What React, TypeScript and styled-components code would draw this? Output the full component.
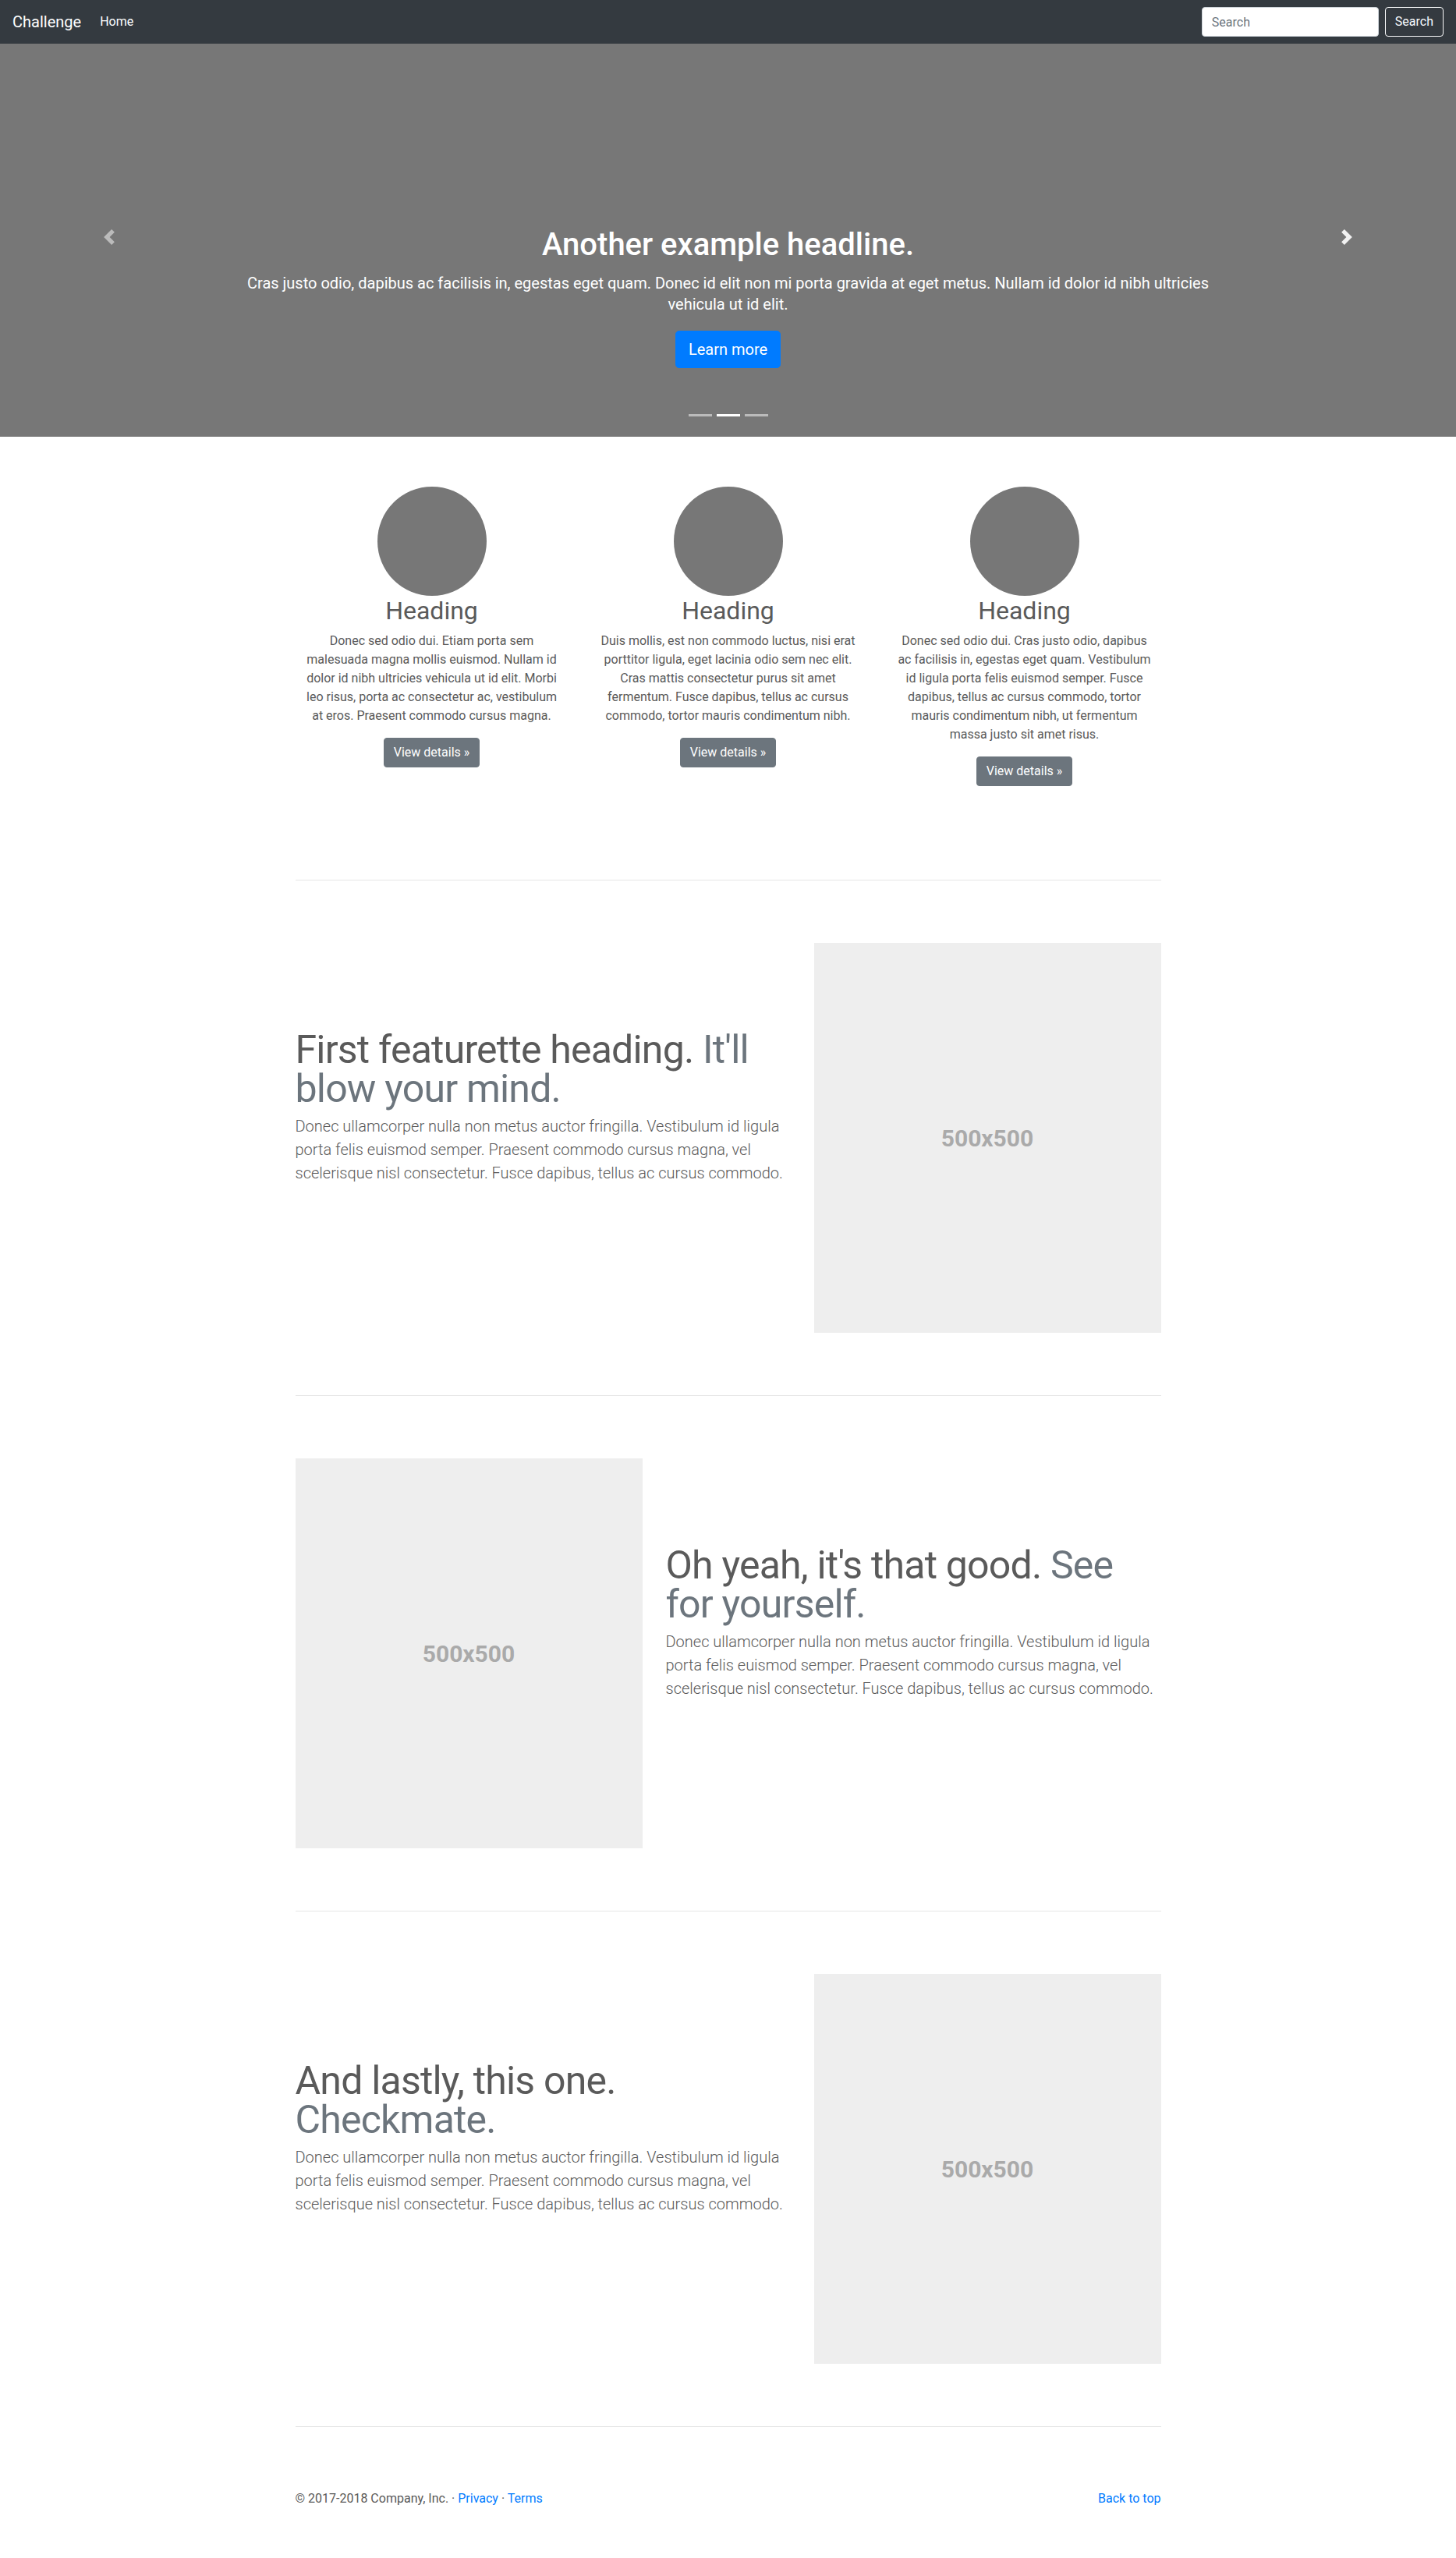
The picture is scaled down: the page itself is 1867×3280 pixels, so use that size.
import React from "react";
import styled, { createGlobalStyle } from "styled-components";

const GlobalStyle = createGlobalStyle`
  *, *::before, *::after { box-sizing: border-box; }
  html, body { margin: 0; padding: 0; }
  body {
    font-family: Roboto, "Liberation Sans", Arial, sans-serif;
    font-size: 16px;
    line-height: 1.5;
    color: #5a5a5a;
    background: #fff;
  }
  a { color: #007bff; text-decoration: none; }
`;

const Page = styled.div`
  padding-bottom: 48px;
`;

/* ---------- Navbar ---------- */
const Navbar = styled.nav`
  display: flex;
  align-items: center;
  justify-content: space-between;
  height: 56px;
  padding: 8px 16px;
  background: #343a40;
`;

const NavLeft = styled.div`
  display: flex;
  align-items: center;
`;

const Brand = styled.a`
  font-size: 20px;
  line-height: 30px;
  padding: 5px 0;
  margin-right: 16px;
  color: #fff;
`;

const NavItem = styled.a`
  font-size: 16px;
  line-height: 24px;
  padding: 8px;
  color: #fff;
`;

const SearchForm = styled.form`
  display: flex;
  align-items: center;
  margin: 0;
`;

const SearchInput = styled.input`
  width: 227px;
  height: 38px;
  margin-right: 8px;
  padding: 6px 12px;
  font-family: inherit;
  font-size: 16px;
  line-height: 24px;
  color: #495057;
  background: #fff;
  border: 1px solid #ced4da;
  border-radius: 4px;
  outline: none;
  &::placeholder { color: #6c757d; }
`;

const OutlineButton = styled.button`
  height: 38px;
  padding: 6px 12px;
  font-family: inherit;
  font-size: 16px;
  line-height: 24px;
  color: #f8f9fa;
  background: transparent;
  border: 1px solid #f8f9fa;
  border-radius: 4px;
`;

/* ---------- Carousel ---------- */
const Carousel = styled.section`
  position: relative;
  height: 504px;
  margin-bottom: 64px;
  background: #777;
  display: flex;
  justify-content: center;
  align-items: flex-end;
  overflow: hidden;
`;

const Caption = styled.div`
  position: relative;
  z-index: 2;
  width: 70%;
  padding-bottom: 88px;
  text-align: center;
  color: #fff;
`;

const CaptionTitle = styled.h1`
  margin: 0 0 12px;
  font-size: 40px;
  font-weight: 500;
  line-height: 48px;
`;

const CaptionText = styled.p`
  margin: 0 0 20px;
  font-size: 20px;
  line-height: 27px;
`;

const PrimaryButton = styled.a`
  display: inline-block;
  padding: 8px 16px;
  font-size: 20px;
  line-height: 30px;
  color: #fff;
  background: #007bff;
  border: 1px solid #007bff;
  border-radius: 4.8px;
`;

const Control = styled.a<{ $side: "left" | "right"; $opacity: number }>`
  position: absolute;
  top: 0;
  bottom: 0;
  ${(p) => (p.$side === "left" ? "left: 0;" : "right: 0;")}
  width: 15%;
  z-index: 1;
  display: flex;
  align-items: center;
  justify-content: center;
  padding-bottom: 8px;
  opacity: ${(p) => p.$opacity};
`;

const Indicators = styled.ol`
  position: absolute;
  left: 0;
  right: 0;
  bottom: 26px;
  z-index: 3;
  margin: 0;
  padding: 0;
  list-style: none;
  display: flex;
  justify-content: center;
  gap: 6px;
`;

const Indicator = styled.li<{ $active?: boolean }>`
  width: 30px;
  height: 3px;
  background: #fff;
  opacity: ${(p) => (p.$active ? 1 : 0.5)};
`;

/* ---------- Marketing ---------- */
const Container = styled.div`
  width: 1140px;
  margin: 0 auto;
  padding: 0 15px;
`;

const MarketingGrid = styled.div`
  display: grid;
  grid-template-columns: repeat(3, 350px);
  column-gap: 30px;
  align-items: start;
`;

const MarketingCol = styled.div`
  text-align: center;
  margin-bottom: 24px;
`;

const Circle = styled.div`
  width: 140px;
  height: 140px;
  margin: 0 auto;
  border-radius: 50%;
  background: #777;
`;

const ColHeading = styled.h2`
  margin: 0 0 8px;
  font-size: 32px;
  font-weight: 400;
  line-height: 1.2;
`;

const ColText = styled.p`
  margin: 0 10px 16px;
`;

const ButtonRow = styled.div`
  display: flex;
  justify-content: center;
  margin-bottom: 16px;
`;

const SecondaryButton = styled.a`
  display: inline-block;
  padding: 6px 12px;
  font-size: 16px;
  line-height: 24px;
  color: #fff;
  background: #6c757d;
  border: 1px solid #6c757d;
  border-radius: 4px;
`;

/* ---------- Featurettes ---------- */
const Divider = styled.hr`
  margin: 80px 0;
  height: 0;
  border: 0;
  border-top: 1px solid rgba(0, 0, 0, 0.1);
`;

const FeatureRow = styled.div<{ $reverse?: boolean }>`
  display: grid;
  grid-template-columns: ${(p) => (p.$reverse ? "445px 635px" : "635px 445px")};
  column-gap: 30px;
  align-items: start;
`;

const FeatureText = styled.div``;

const FeatureHeading = styled.h2`
  margin: 112px 0 8px;
  font-size: 50px;
  font-weight: 400;
  line-height: 1;
  letter-spacing: -0.8px;
`;

const Muted = styled.span`
  color: #6c757d;
`;

const Lead = styled.p`
  margin: 0 0 16px;
  font-size: 20px;
  font-weight: 300;
  line-height: 30px;
`;

const Placeholder = styled.div`
  width: 445px;
  height: 500px;
  background: #eee;
  display: flex;
  align-items: center;
  justify-content: center;
  color: #aaa;
  font-size: 30px;
  font-weight: 700;
`;

/* ---------- Footer ---------- */
const Footer = styled.footer`
  display: flex;
  justify-content: space-between;
`;

const FooterText = styled.p`
  margin: 0 0 16px;
`;

const PrevIcon = () => (
  <svg width="20" height="20" viewBox="0 0 8 8" fill="#fff">
    <path d="M5.25 0l-4 4 4 4 1.5-1.5-2.5-2.5 2.5-2.5-1.5-1.5z" />
  </svg>
);

const NextIcon = () => (
  <svg width="20" height="20" viewBox="0 0 8 8" fill="#fff">
    <path d="M2.75 0l-1.5 1.5 2.5 2.5-2.5 2.5 1.5 1.5 4-4-4-4z" />
  </svg>
);

const columns = [
  "Donec sed odio dui. Etiam porta sem malesuada magna mollis euismod. Nullam id dolor id nibh ultricies vehicula ut id elit. Morbi leo risus, porta ac consectetur ac, vestibulum at eros. Praesent commodo cursus magna.",
  "Duis mollis, est non commodo luctus, nisi erat porttitor ligula, eget lacinia odio sem nec elit. Cras mattis consectetur purus sit amet fermentum. Fusce dapibus, tellus ac cursus commodo, tortor mauris condimentum nibh.",
  "Donec sed odio dui. Cras justo odio, dapibus ac facilisis in, egestas eget quam. Vestibulum id ligula porta felis euismod semper. Fusce dapibus, tellus ac cursus commodo, tortor mauris condimentum nibh, ut fermentum massa justo sit amet risus.",
];

const leadText =
  "Donec ullamcorper nulla non metus auctor fringilla. Vestibulum id ligula porta felis euismod semper. Praesent commodo cursus magna, vel scelerisque nisl consectetur. Fusce dapibus, tellus ac cursus commodo.";

const features = [
  { main: "First featurette heading.", muted: "It'll blow your mind.", reverse: false },
  { main: "Oh yeah, it's that good.", muted: "See for yourself.", reverse: true },
  { main: "And lastly, this one.", muted: "Checkmate.", reverse: false },
];

export default function App() {
  return (
    <Page>
      <GlobalStyle />
      <Navbar>
        <NavLeft>
          <Brand href="#">Challenge</Brand>
          <NavItem href="#">Home</NavItem>
        </NavLeft>
        <SearchForm onSubmit={(e) => e.preventDefault()}>
          <SearchInput type="text" placeholder="Search" aria-label="Search" />
          <OutlineButton type="submit">Search</OutlineButton>
        </SearchForm>
      </Navbar>

      <Carousel>
        <Control $side="left" $opacity={0.5} href="#">
          <PrevIcon />
        </Control>
        <Caption>
          <CaptionTitle>Another example headline.</CaptionTitle>
          <CaptionText>
            Cras justo odio, dapibus ac facilisis in, egestas eget quam. Donec id elit non mi porta
            gravida at eget metus. Nullam id dolor id nibh ultricies vehicula ut id elit.
          </CaptionText>
          <PrimaryButton href="#">Learn more</PrimaryButton>
        </Caption>
        <Control $side="right" $opacity={0.9} href="#">
          <NextIcon />
        </Control>
        <Indicators>
          <Indicator />
          <Indicator $active />
          <Indicator />
        </Indicators>
      </Carousel>

      <Container>
        <MarketingGrid>
          {columns.map((text, i) => (
            <MarketingCol key={i}>
              <Circle />
              <ColHeading>Heading</ColHeading>
              <ColText>{text}</ColText>
              <ButtonRow>
                <SecondaryButton href="#">View details »</SecondaryButton>
              </ButtonRow>
            </MarketingCol>
          ))}
        </MarketingGrid>

        {features.map((f, i) => {
          const text = (
            <FeatureText key="t">
              <FeatureHeading>
                {f.main} <Muted>{f.muted}</Muted>
              </FeatureHeading>
              <Lead>{leadText}</Lead>
            </FeatureText>
          );
          const img = <Placeholder key="i">500x500</Placeholder>;
          return (
            <React.Fragment key={i}>
              <Divider />
              <FeatureRow $reverse={f.reverse}>
                {f.reverse ? [img, text] : [text, img]}
              </FeatureRow>
            </React.Fragment>
          );
        })}

        <Divider />

        <Footer>
          <FooterText>
            © 2017-2018 Company, Inc. · <a href="#">Privacy</a> · <a href="#">Terms</a>
          </FooterText>
          <FooterText>
            <a href="#">Back to top</a>
          </FooterText>
        </Footer>
      </Container>
    </Page>
  );
}
